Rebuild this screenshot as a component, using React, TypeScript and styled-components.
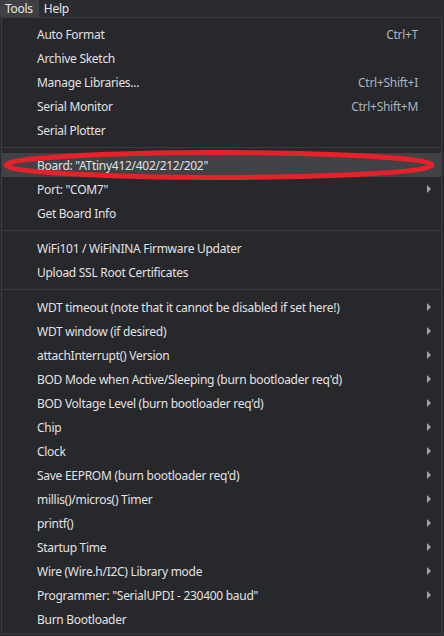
import styled, { createGlobalStyle } from "styled-components";

const GlobalStyle = createGlobalStyle`
html, body {
    margin: 0;
    padding: 0;
    background: #2b2c30;
}
body {
    font-family: "Noto Sans", "Open Sans", sans-serif;
    font-size: 12px;
    letter-spacing: -0.28px;
    width: 444px;
    height: 636px;
    overflow: hidden;
}
`;

const Screen = styled.div`
display: flex;
flex-direction: column;
width: 444px;
height: 636px;
background: #2b2c30;
`;

const MenuBar = styled.div`
display: flex;
height: 18px;
align-items: stretch;
`;

const MenuTitle = styled.div<{ $open?: boolean }>`
display: flex;
align-items: center;
padding: 0 6px 0 5px;
color: #e6e6e6;
background: ${p => p.$open ? "#3e4043" : "transparent"};
`;

const Popup = styled.div`
position: relative;
display: flex;
flex-direction: column;
margin: 0 2px 2px 1px;
padding: 4px 0 2px;
flex: 1;
background: #27282c;
border: 1px solid #3b3c40;
`;

const Item = styled.div<{ $active?: boolean }>`
display: flex;
align-items: center;
height: 24px;
padding: 0 12px 0 35px;
color: #e2e2e2;
background: ${p => p.$active ? "#414246" : "transparent"};
white-space: nowrap;
`;

const Label = styled.span`
flex: 1;
`;

const Shortcut = styled.span`
color: #aab4be;
margin-right: 11px;
`;

const Arrow = styled.span`
width: 0;
height: 0;
border-top: 4px solid transparent;
border-bottom: 4px solid transparent;
border-left: 4px solid #a3a3a3;
margin-right: -2px;
`;

const Separator = styled.div`
height: 1px;
margin: 5px 0;
background: #3a3b3f;
`;

const Ring = styled.svg`
position: absolute;
left: 0;
top: 130px;
pointer-events: none;
`;

type Entry = { label: string, shortcut?: string, sub?: boolean, active?: boolean } | "sep";

const entries: Entry[] = [
    { label: "Auto Format", shortcut: "Ctrl+T" },
    { label: "Archive Sketch" },
    { label: "Manage Libraries...", shortcut: "Ctrl+Shift+I" },
    { label: "Serial Monitor", shortcut: "Ctrl+Shift+M" },
    { label: "Serial Plotter" },
    "sep",
    { label: "Board: \"ATtiny412/402/212/202\"", sub: true, active: true },
    { label: "Port: \"COM7\"", sub: true },
    { label: "Get Board Info" },
    "sep",
    { label: "WiFi101 / WiFiNINA Firmware Updater" },
    { label: "Upload SSL Root Certificates" },
    "sep",
    { label: "WDT timeout (note that it cannot be disabled if set here!)", sub: true },
    { label: "WDT window (if desired)", sub: true },
    { label: "attachInterrupt() Version", sub: true },
    { label: "BOD Mode when Active/Sleeping (burn bootloader req'd)", sub: true },
    { label: "BOD Voltage Level (burn bootloader req'd)", sub: true },
    { label: "Chip", sub: true },
    { label: "Clock", sub: true },
    { label: "Save EEPROM (burn bootloader req'd)", sub: true },
    { label: "millis()/micros() Timer", sub: true },
    { label: "printf()", sub: true },
    { label: "Startup Time", sub: true },
    { label: "Wire (Wire.h/I2C) Library mode", sub: true },
    { label: "Programmer: \"SerialUPDI - 230400 baud\"", sub: true },
    { label: "Burn Bootloader" },
];

export default function App() {
    return (
        <Screen>
            <GlobalStyle />
            <MenuBar>
                <MenuTitle $open>Tools</MenuTitle>
                <MenuTitle>Help</MenuTitle>
            </MenuBar>
            <Popup>
                {entries.map((e, i) => e === "sep"
                    ? <Separator key={i} />
                    : (
                        <Item key={i} $active={e.active}>
                            <Label>{e.label}</Label>
                            {e.shortcut && <Shortcut>{e.shortcut}</Shortcut>}
                            {e.sub && <Arrow />}
                        </Item>
                    ))}
                <Ring width="440" height="34" viewBox="0 0 440 34">
                    <ellipse cx="217" cy="17" rx="213" ry="12.5" fill="none" stroke="#e8202a" strokeWidth="5" />
                </Ring>
            </Popup>
        </Screen>
    );
}
